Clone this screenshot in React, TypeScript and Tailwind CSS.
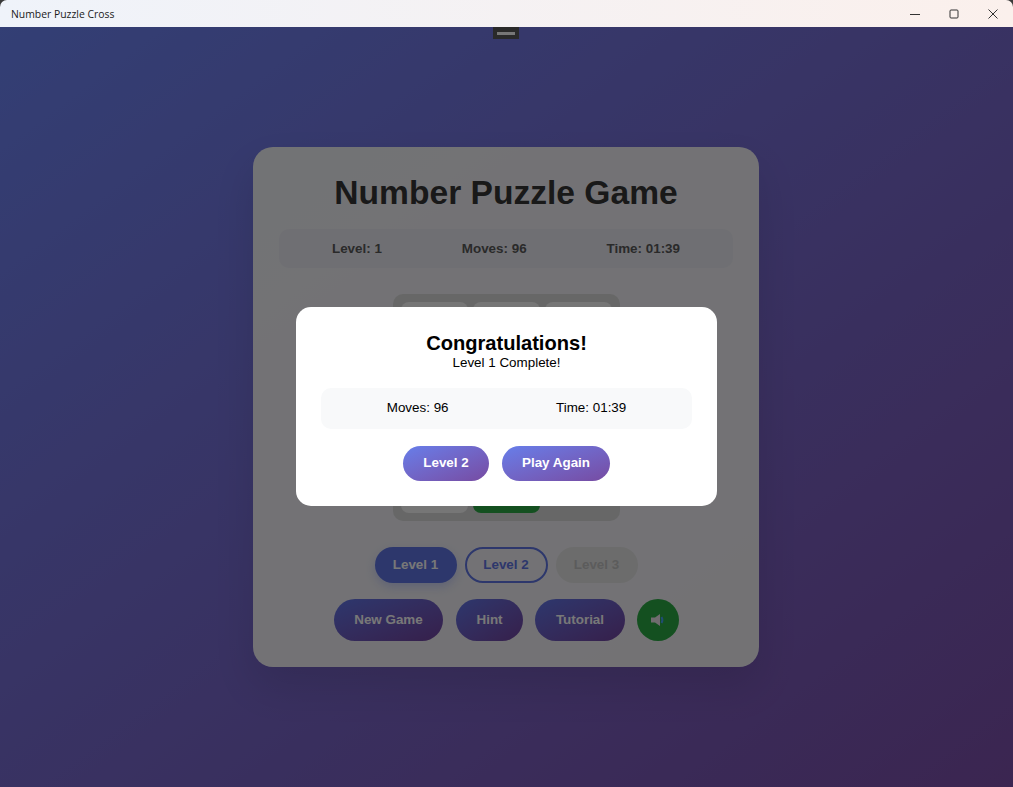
import React from "react";

const cells = ["1", "2", "3", "4", "5", "6", "7", "8"];

export default function App() {
  return (
    <div className="flex h-screen w-full flex-col overflow-hidden bg-[#3a3a3a] font-['Liberation_Sans',Arial,sans-serif]">
      <header className="flex h-[27px] shrink-0 items-center justify-between rounded-t-[7px] bg-gradient-to-r from-[#eff3fa] to-[#fbf0ec] pl-[11px]">
        <span className="mt-[2px] font-['Open_Sans','Noto_Sans',sans-serif] text-[10.4px] text-[#1a1a1a]">Number Puzzle Cross</span>
        <div className="flex items-center">
          <button className="flex h-[27px] w-[38px] items-center justify-center">
            <svg width="10" height="10" viewBox="0 0 10 10" fill="none" stroke="#333" strokeWidth="1"><path d="M0 5.5h10" /></svg>
          </button>
          <button className="flex h-[27px] w-[39px] items-center justify-center">
            <svg width="10" height="10" viewBox="0 0 10 10" fill="none" stroke="#333" strokeWidth="1"><rect x="1" y="1" width="8" height="8" rx="1" /></svg>
          </button>
          <button className="flex h-[27px] w-[40px] items-center justify-center">
            <svg width="10" height="10" viewBox="0 0 10 10" fill="none" stroke="#333" strokeWidth="1"><path d="M.5.5l9 9M9.5.5l-9 9" /></svg>
          </button>
        </div>
      </header>

      <main className="relative flex flex-1 items-center justify-center bg-gradient-to-br from-[#667eea] to-[#764ba2]">
        <section className="mr-[1px] w-[506px] rounded-[20px] bg-[#ececec]/95 p-[26px] text-[#333] shadow-[0_20px_40px_rgba(0,0,0,0.1)]">
          <h1 className="mb-[18px] pt-[1px] text-center text-[33.6px] leading-[37px] font-bold">Number Puzzle Game</h1>
          <div className="flex h-[39px] items-center justify-around rounded-[10px] bg-[#dfdfe6] px-[13px] pt-[1px] text-[13.4px] font-bold text-[#555]">
            <span>Level: 1</span>
            <span>Moves: 96</span>
            <span>Time: 01:39</span>
          </div>
          <div className="mx-auto mt-[26px] grid w-[227px] grid-cols-3 gap-[5px] rounded-[10px] bg-[#cfcfcf] p-[8px]">
            {cells.map((n, i) => (
              <div
                key={n}
                className={`flex h-[67px] items-center justify-center rounded-[8px] text-[24px] font-bold ${i === 7 ? "bg-[#28a040] text-white" : "bg-[#ececec] text-[#333]"}`}
              >
                {n}
              </div>
            ))}
          </div>
          <div className="mt-[26px] flex justify-center gap-[8px] text-[13.4px] font-bold">
            <button className="h-[36px] w-[82px] rounded-[18px] bg-[#5a6fd8] text-[#f0f0f0] shadow-[0_4px_10px_rgba(102,126,234,0.3)]">Level 1</button>
            <button className="h-[36px] w-[83px] rounded-[18px] border-2 border-[#5a6fd8] text-[#5a6fd8]">Level 2</button>
            <button className="h-[36px] w-[82px] rounded-[18px] bg-[#d8d8d8] text-[#b8b8b8]">Level 3</button>
          </div>
          <div className="mt-[16px] flex items-center justify-center gap-[12px] pl-[1px] text-[13.4px] font-bold text-[#f0f0f0]">
            <button className="h-[42px] w-[109px] rounded-[21px] bg-gradient-to-br from-[#5a6fdc] to-[#6c3f96] pt-[1px]">New Game</button>
            <button className="ml-[1px] h-[42px] w-[67px] rounded-[21px] bg-gradient-to-br from-[#5a6fdc] to-[#6c3f96] pt-[1px]">Hint</button>
            <button className="h-[42px] w-[90px] rounded-[21px] bg-gradient-to-br from-[#5a6fdc] to-[#6c3f96] pt-[1px]">Tutorial</button>
            <button className="flex h-[42px] w-[42px] items-center justify-center rounded-full bg-[#28a040]">
              <svg width="16" height="16" viewBox="0 0 16 16">
                <path d="M1 5.5h4L10 2v12l-5-3.5H1z" fill="#e0d8de" />
                <path d="M11.5 5c1.2 2 1.2 4 0 6" fill="none" stroke="#3f9be8" strokeWidth="2" />
              </svg>
            </button>
          </div>
        </section>

        <div className="absolute inset-0 flex items-center justify-center bg-black/50 pb-[1px]">
          <div className="w-[421px] rounded-[15px] bg-white px-[25px] pt-[24px] pb-[25px] text-center text-black">
            <h2 className="text-[20.1px] leading-[24px] font-bold">Congratulations!</h2>
            <p className="text-[13.4px] leading-[16px]">Level 1 Complete!</p>
            <div className="mt-[17px] flex h-[41px] items-center justify-around rounded-[10px] bg-[#f8f9fa] px-[12px] text-[13.4px]">
              <span>Moves: 96</span>
              <span>Time: 01:39</span>
            </div>
            <div className="mt-[17px] flex justify-center gap-[13px] text-[13.4px] font-bold text-white">
              <button className="h-[35px] w-[86px] rounded-[18px] bg-gradient-to-br from-[#667eea] to-[#764ba2]">Level 2</button>
              <button className="h-[35px] w-[108px] rounded-[18px] bg-gradient-to-br from-[#667eea] to-[#764ba2]">Play Again</button>
            </div>
          </div>
        </div>

        <div className="absolute top-0 left-[493px] flex h-[12px] w-[26px] items-center justify-center bg-[#2a2a2a]">
          <div className="h-[3px] w-[18px] bg-[#777]" />
        </div>
      </main>
    </div>
  );
}
